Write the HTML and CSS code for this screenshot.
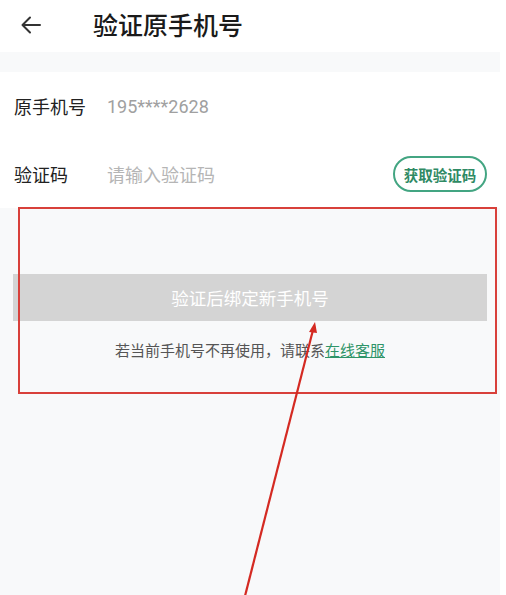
FILE: index.html
```html
<!DOCTYPE html>
<html lang="zh-CN">

<head>
    <meta charset="UTF-8">
    <meta name="viewport" content="width=device-width, initial-scale=1.0">
    <title>验证原手机号</title>
    <link rel="stylesheet" href="styles.css">
</head>

<body>
    <div class="page">
        <div class="header">
            <svg class="back" width="22" height="20" viewBox="0 0 22 20">
                <path d="M20 10H3M10 2.5L2.5 10L10 17.5" fill="none" stroke="#333" stroke-width="2" stroke-linecap="round" stroke-linejoin="round" />
            </svg>
            <h1 class="title">验证原手机号</h1>
        </div>

        <div class="form">
            <div class="form-row">
                <span class="label">原手机号</span>
                <span class="value">195****2628</span>
            </div>
            <div class="form-row">
                <span class="label">验证码</span>
                <input class="code-input" type="text" placeholder="请输入验证码">
                <button class="code-btn">获取验证码</button>
            </div>
        </div>

        <div class="actions">
            <button class="submit-btn">验证后绑定新手机号</button>
            <p class="hint">若当前手机号不再使用，请联系<a href="#">在线客服</a></p>
        </div>

        <!-- annotation on the screenshot -->
        <div class="mark-box"></div>
        <svg class="mark-arrow" width="506" height="595" viewBox="0 0 506 595">
            <line x1="245" y1="596" x2="313" y2="330" stroke="#d42a22" stroke-width="2.2" />
            <path d="M315 322L309 332L317 333Z" fill="#d42a22" />
        </svg>
    </div>
</body>

</html>
```

FILE: styles.css
```css
body {
    margin: 0;
    background: #fff;
    font-family: "Noto Sans CJK SC", "Noto Sans", sans-serif;
}

.page {
    position: relative;
    width: 500px;
    height: 595px;
    background: #f8f9fa;
    overflow: hidden;
}

.header {
    height: 52px;
    background: #fff;
    display: flex;
    align-items: center;
    padding-left: 20px;
    margin-bottom: 20px;
}

.back {
    margin-top: -2px;
}

.title {
    margin: -4px 0 0 51px;
    font-size: 25px;
    font-weight: 500;
    color: #1a1a1a;
}

.form {
    background: #fff;
}

.form-row {
    height: 68px;
    display: flex;
    align-items: center;
    padding: 0 13px 0 14px;
}

.label {
    width: 93px;
    font-size: 18px;
    color: #222;
}

.value {
    font-size: 18px;
    color: #a0a0a0;
    font-family: "Roboto", "Noto Sans CJK SC", sans-serif;
}

.code-input {
    flex: 1;
    border: none;
    outline: none;
    padding: 0;
    font-size: 18px;
    font-family: inherit;
    background: transparent;
}

.code-input::placeholder {
    color: #b5b5b5;
}

.code-btn {
    width: 94px;
    height: 36px;
    border: 2px solid #43a582;
    border-radius: 18px;
    background: #fff;
    color: #2f8a64;
    font-size: 14.5px;
    font-weight: 700;
    font-family: inherit;
    padding: 0;
}

.actions {
    padding: 66px 13px 0;
}

.submit-btn {
    width: 100%;
    height: 47px;
    border: none;
    background: #d4d4d4;
    color: #fff;
    font-size: 17.5px;
    font-family: inherit;
}

.hint {
    margin: 18px 0 0;
    text-align: center;
    font-size: 15px;
    color: #555;
}

.hint a {
    color: #2e9468;
}

.mark-box {
    position: absolute;
    left: 18px;
    top: 207px;
    width: 475px;
    height: 183px;
    border: 2px solid #d8403a;
}

.mark-arrow {
    position: absolute;
    left: 0;
    top: 0;
}
```
